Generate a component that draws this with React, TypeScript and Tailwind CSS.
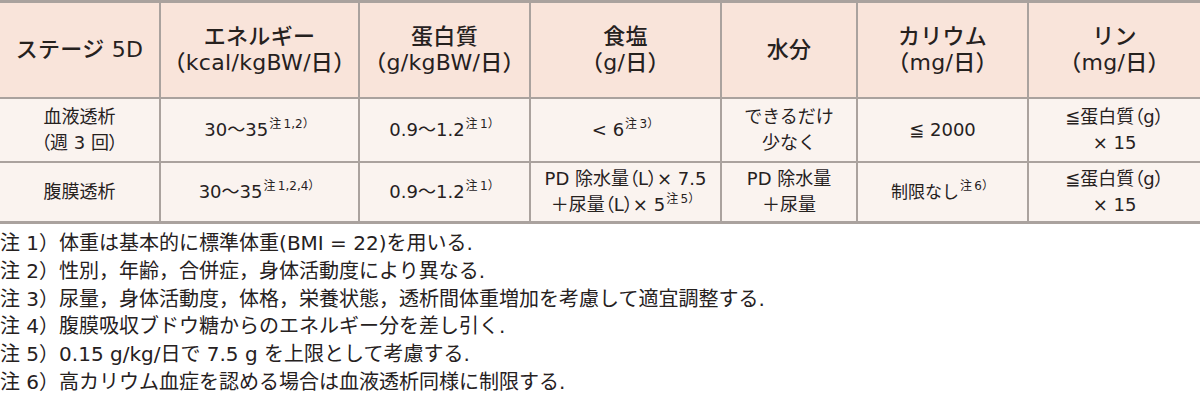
import type { ReactNode } from "react";

const font = { fontFamily: '"DejaVu Sans", "Noto Sans CJK JP", sans-serif' };

function Note({ children }: { children: ReactNode }) {
  return <sup className="relative -top-[1px] ml-[1px] align-super text-[12px] leading-none">{children}</sup>;
}

// proportional parentheses, like the print layout
function P({ children }: { children: ReactNode }) {
  return <span className="[font-feature-settings:'palt']">{children}</span>;
}

const headers: { top: string; bottom?: string; w: string }[] = [
  { top: "ステージ 5D", w: "w-[160px]" },
  { top: "エネルギー", bottom: "（kcal/kgBW/日）", w: "w-[199px]" },
  { top: "蛋白質", bottom: "（g/kgBW/日）", w: "w-[171px]" },
  { top: "食塩", bottom: "（g/日）", w: "w-[191px]" },
  { top: "水分", w: "w-[136px]" },
  { top: "カリウム", bottom: "（mg/日）", w: "w-[171px]" },
  { top: "リン", bottom: "（mg/日）", w: "w-[172px]" },
];

const notes = [
  "注 1）体重は基本的に標準体重(BMI = 22)を用いる.",
  "注 2）性別，年齢，合併症，身体活動度により異なる.",
  "注 3）尿量，身体活動度，体格，栄養状態，透析間体重増加を考慮して適宜調整する.",
  "注 4）腹膜吸収ブドウ糖からのエネルギー分を差し引く.",
  "注 5）0.15 g/kg/日で 7.5 g を上限として考慮する.",
  "注 6）高カリウム血症を認める場合は血液透析同様に制限する.",
];

const cell = "border-x-2 border-[#aaa29e] first:border-l-0 last:border-r-0 text-center align-middle";

export default function App() {
  return (
    <div className="w-[1200px] h-[400px] bg-white text-[#26211e] overflow-hidden" style={font}>
      <table className="w-[1200px] table-fixed border-collapse">
        <thead>
          <tr className="h-[96px] bg-[#f9e4da] border-t-[3px] border-b-2 border-[#aaa29e]">
            {headers.map((h) => (
              <th key={h.top} className={`${cell} ${h.w} text-[22px] font-medium leading-[26px] tracking-[0.3px]`}>
                <div>{h.top}</div>
                {h.bottom && <div>{h.bottom}</div>}
              </th>
            ))}
          </tr>
        </thead>
        <tbody className="bg-[#faf3ef] text-[18px] leading-[26px]">
          {/* 血液透析 */}
          <tr className="h-[64px] border-b-2 border-[#aaa29e]">
            <td className={cell}>
              <div>血液透析</div>
              <div>
                <P>（</P>週 3 回<P>）</P>
              </div>
            </td>
            <td className={cell}>
              30～35<Note>注&#8201;1,2）</Note>
            </td>
            <td className={cell}>
              0.9～1.2<Note>注&#8201;1）</Note>
            </td>
            <td className={cell}>
              &lt; 6<Note>注&#8201;3）</Note>
            </td>
            <td className={cell}>
              <div>できるだけ</div>
              <div>少なく</div>
            </td>
            <td className={cell}>≦ 2000</td>
            <td className={cell}>
              <div>
                ≦蛋白質<P>（g）</P>
              </div>
              <div>× 15</div>
            </td>
          </tr>
          {/* 腹膜透析 */}
          <tr className="h-[61px] border-b-[3px] border-[#aaa29e]">
            <td className={cell}>腹膜透析</td>
            <td className={cell}>
              30～35<Note>注&#8201;1,2,4）</Note>
            </td>
            <td className={cell}>
              0.9～1.2<Note>注&#8201;1）</Note>
            </td>
            <td className={cell}>
              <div>
                PD 除水量<P>（L）</P>× 7.5
              </div>
              <div>
                ＋尿量<P>（L）</P>× 5<Note>注&#8201;5）</Note>
              </div>
            </td>
            <td className={cell}>
              <div>PD 除水量</div>
              <div>＋尿量</div>
            </td>
            <td className={`${cell} text-[17px]`}>
              制限なし<Note>注&#8201;6）</Note>
            </td>
            <td className={cell}>
              <div>
                ≦蛋白質<P>（g）</P>
              </div>
              <div>× 15</div>
            </td>
          </tr>
        </tbody>
      </table>

      <div className="pt-[6px] text-[20px] leading-[27.8px]">
        {notes.map((n) => (
          <div key={n}>{n}</div>
        ))}
      </div>
    </div>
  );
}
